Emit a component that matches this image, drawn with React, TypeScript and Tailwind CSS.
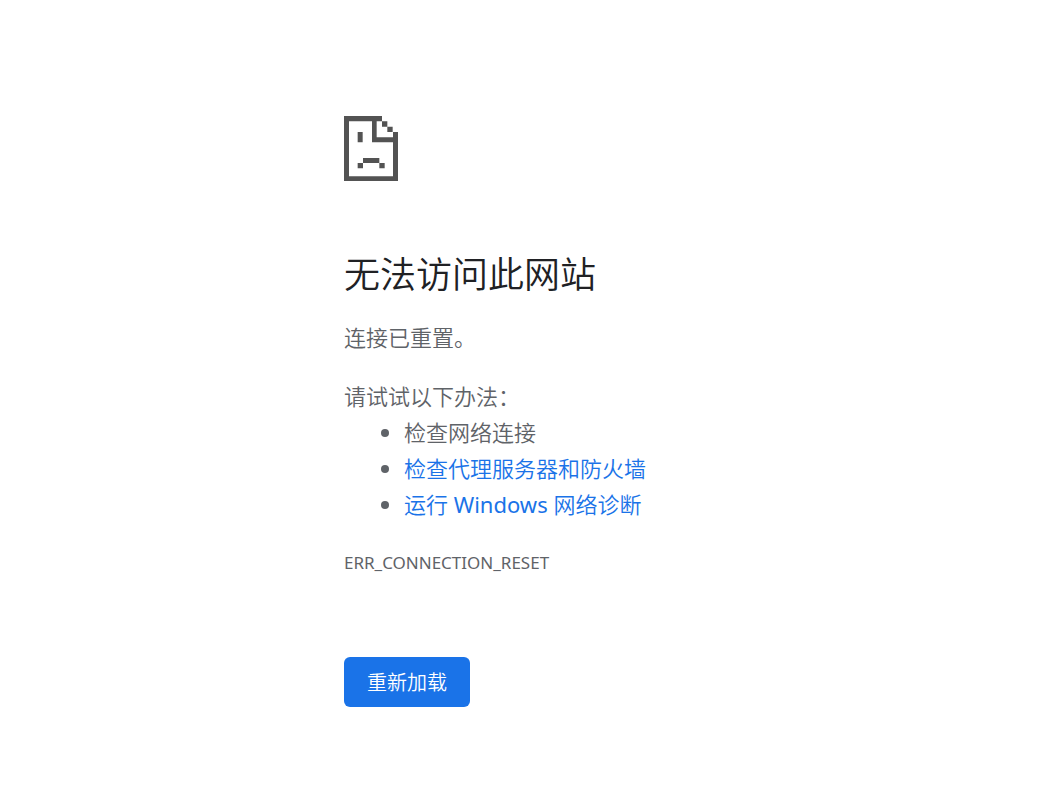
import React, { FC, ReactNode } from 'react';

const App: FC = () => (
    <main className="min-h-screen bg-white px-6 font-['Noto_Sans','Noto_Sans_CJK_SC',sans-serif] font-[350] text-[#5f6368]">
        <div className="mx-auto max-w-[374px] pt-[116px]">
            <SadPageIcon />

            <h1 className="mt-[72px] text-4xl leading-[44px] text-[#202124]">无法访问此网站</h1>
            <p className="mt-[22px] text-[22px] leading-9">连接已重置。</p>

            <p className="mt-[23px] text-[22px] leading-9">请试试以下办法：</p>
            <ul className="list-disc pl-[60px] text-[22px] leading-9">
                <li>检查网络连接</li>
                <li><HelpLink href="#proxy">检查代理服务器和防火墙</HelpLink></li>
                <li><HelpLink href="#diagnose">运行 <span className="font-normal">Windows</span> 网络诊断</HelpLink></li>
            </ul>

            <p className="mt-[27px] text-[17px] leading-7 font-normal">ERR_CONNECTION_RESET</p>

            <button type="button" className="mt-20 h-[50px] rounded-md bg-[#1a73e8] px-[23px] pt-0.5 text-xl text-white">
                重新加载
            </button>
        </div>
    </main>
);

interface HelpLinkProps {
    href: string,
    children: ReactNode,
}

const HelpLink: FC<HelpLinkProps> = ({ href, children }) => (
    <a href={href} className="whitespace-nowrap text-[#1a73e8]">{children}</a>
);

const SadPageIcon: FC = () => (
    <svg className="block h-[65px] w-[54px]" viewBox="0 0 162 195" fill="#535353" aria-hidden="true">
        {/* page outline and folded corner */}
        <path d="M0 0H114V16H98V64H147V48H162V195H0ZM15 16V181H147V79H84V16Z" fillRule="evenodd" />
        <path d="M114 16H130V32H114ZM130 32H146V48H130Z" />
        {/* eye and mouth */}
        <path d="M41 48H56V79H41ZM57 126H106V141H57ZM41 141H57V157H41ZM106 141H122V157H106Z" />
    </svg>
);

export default App;
